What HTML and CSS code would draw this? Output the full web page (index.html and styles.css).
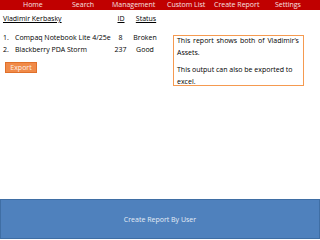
FILE: index.html
```html
<!DOCTYPE html>
<html>
<head>
<meta charset="utf-8">
<link rel="stylesheet" href="styles.css">
</head>
<body>
<div class="page">
  <nav class="nav">
    <span class="nav-item home">Home</span>
    <span class="nav-item search">Search</span>
    <span class="nav-item mgmt">Management</span>
    <span class="nav-item custom">Custom List</span>
    <span class="nav-item create">Create Report</span>
    <span class="nav-item settings">Settings</span>
  </nav>
  <main class="main">
    <section class="left">
      <div class="report">
        <span class="hd name-hd">Vladimir Kerbasky</span>
        <span class="hd id-hd">ID</span>
        <span class="hd status-hd">Status</span>

        <span class="num">1.</span>
        <span class="name">Compaq Notebook Lite 4/25e</span>
        <span class="id">8</span>
        <span class="status">Broken</span>

        <span class="num">2.</span>
        <span class="name">Blackberry PDA Storm</span>
        <span class="id">237</span>
        <span class="status">Good</span>
      </div>
      <button class="export">Export</button>
    </section>
    <aside class="note">
      <p class="first">This report shows both of Vladimir’s Assets.</p>
      <p>This output can also be exported to excel.</p>
    </aside>
  </main>
  <footer class="footer">Create Report By User</footer>
</div>
</body>
</html>
```
FILE: styles.css
```css
* { box-sizing: border-box; }
html, body { margin: 0; padding: 0; background: #fff; }
body {
  font-family: "Open Sans", "Liberation Sans", sans-serif;
  font-size: 7px;
  color: #000;
}
.page {
  width: 320px;
  height: 240px;
  display: flex;
  flex-direction: column;
}
.nav {
  height: 10px;
  background: #c00000;
  display: flex;
  align-items: center;
  padding-left: 23px;
  color: #f6e0e0;
  font-size: 7px;
  line-height: 10px;
}
.nav-item { display: block; }
.home { width: 49px; }
.search { width: 40px; }
.mgmt { width: 55px; }
.custom { width: 47px; }
.create { width: 61px; }
.main {
  display: flex;
  align-items: flex-start;
  padding: 3px 0 0 3px;
}
.left {
  width: 170px;
  display: flex;
  flex-direction: column;
}
.report {
  display: grid;
  grid-template-columns: 12px 97px 17px 32px;
  line-height: 12px;
}
.hd { text-decoration: underline; margin-bottom: 7px; }
.name-hd { grid-column: 1 / 3; }
.id-hd { text-align: center; padding-left: 1px; }
.status-hd { text-align: center; padding-left: 2px; }
.id { text-align: center; }
.status { text-align: center; }
.export {
  align-self: flex-start;
  margin: 6px 0 0 2px;
  width: 32px;
  height: 11px;
  padding: 0;
  border: 1px solid #e0702a;
  background: #f08a48;
  color: #fdf0e8;
  font-family: inherit;
  font-size: 7px;
  line-height: 9px;
}
.note {
  margin: 22px 0 0 0;
  width: 131px;
  height: 51px;
  border: 1px solid #f59a50;
  padding: 0 3px;
  line-height: 12px;
  font-size: 7px;
}
.note p { margin: 0; }
.note p.first { margin-top: -1px; word-spacing: 1px; }
.note p + p { margin-top: 5px; }
.footer {
  margin-top: auto;
  margin-bottom: 1px;
  height: 40px;
  background: #4f81bd;
  border: 1px solid #3f6ea4;
  color: #e4ecf6;
  display: flex;
  align-items: center;
  justify-content: center;
  font-size: 7px;
}
```
